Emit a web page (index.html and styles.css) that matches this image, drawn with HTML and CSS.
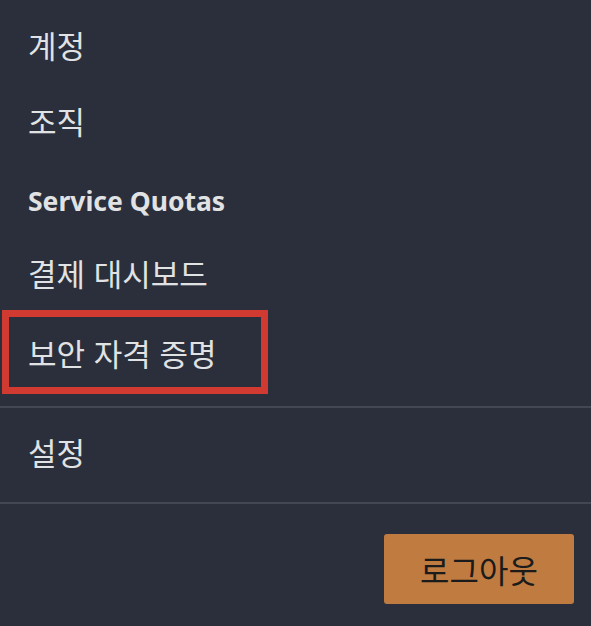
FILE: index.html
```html
<!DOCTYPE html>
<html lang="ko">
<head>
    <meta charset="UTF-8">
    <meta name="viewport" content="width=device-width, initial-scale=1.0">
    <title>계정 메뉴</title>
    <link rel="stylesheet" href="styles.css">
</head>
<body>
    <div class="account-menu">
        <ul class="menu-list">
            <li><a href="#" class="menu-item">계정</a></li>
            <li><a href="#" class="menu-item">조직</a></li>
            <li><a href="#" class="menu-item menu-item-latin">Service Quotas</a></li>
            <li><a href="#" class="menu-item">결제 대시보드</a></li>
            <li><a href="#" class="menu-item highlighted">보안 자격 증명</a></li>
        </ul>

        <ul class="menu-list settings">
            <li><a href="#" class="menu-item">설정</a></li>
        </ul>

        <div class="menu-footer">
            <button type="button" class="logout-btn">로그아웃</button>
        </div>
    </div>
</body>
</html>
```

FILE: styles.css
```css
* {
    margin: 0;
    padding: 0;
    box-sizing: border-box;
}

body {
    background: #2a2f3b;
    font-family: "Noto Sans CJK KR", sans-serif;
    width: 591px;
    height: 626px;
    overflow: hidden;
}

.account-menu {
    display: flex;
    flex-direction: column;
}

.menu-list {
    list-style: none;
    padding-top: 6px;
    padding-bottom: 12px;
    border-bottom: 2px solid #434753;
}

.menu-list.settings {
    padding-top: 0;
    padding-bottom: 0;
}

.menu-item {
    display: flex;
    align-items: center;
    height: 76px;
    padding-left: 28px;
    color: #e1e2e4;
    font-size: 31px;
    text-decoration: none;
}

.menu-item-latin {
    padding-top: 10px;
    font-family: "Noto Sans", sans-serif;
    font-weight: bold;
    font-size: 26.5px;
}

.settings .menu-item {
    height: 94px;
    padding-bottom: 8px;
}

/* annotation box around the item */
.menu-item.highlighted {
    width: 266px;
    height: 84px;
    margin-left: 2px;
    padding-left: 19px;
    border: 7px solid #d13a30;
}

.menu-footer {
    display: flex;
    justify-content: flex-end;
    padding: 30px 17px 0 0;
}

.logout-btn {
    width: 190px;
    height: 70px;
    background: #c07b41;
    color: #1b1b1b;
    border: none;
    border-radius: 3px;
    font-family: "Noto Sans CJK KR", sans-serif;
    font-size: 32px;
    cursor: pointer;
}
```
